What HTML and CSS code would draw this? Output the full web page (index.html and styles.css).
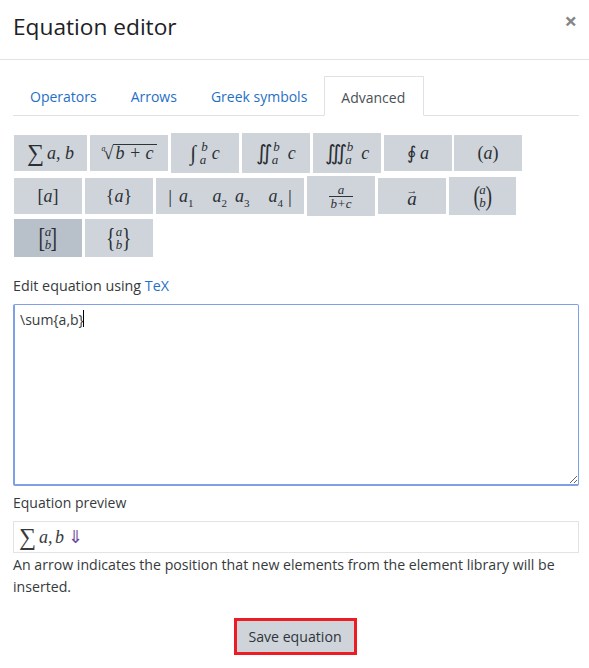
FILE: index.html
```html
<!DOCTYPE html>
<html lang="en">
<head>
    <meta charset="UTF-8">
    <title>Equation editor</title>
    <link rel="stylesheet" href="styles.css">
</head>
<body>
    <div class="modal-header">
        <h1>Equation editor</h1>
        <span class="close">&times;</span>
    </div>

    <div class="modal-body">
        <ul class="tabs">
            <li><a href="#">Operators</a></li>
            <li><a href="#">Arrows</a></li>
            <li><a href="#">Greek symbols</a></li>
            <li class="active"><a href="#">Advanced</a></li>
        </ul>

        <div class="library">
            <button class="eq w73"><span class="sigma">&sum;</span><i>a, b</i></button>
            <button class="eq w78"><sup class="idx">a</sup><span class="radic">&radic;</span><span class="over"><i>b + c</i></span></button>
            <button class="eq tall"><span class="int">&int;</span><span class="limits"><i class="up">b</i><i>a</i></span><i class="after">c</i></button>
            <button class="eq tall multi"><span class="int">&Int;</span><span class="limits"><i class="up">b</i><i>a</i></span><i class="after">c</i></button>
            <button class="eq tall multi"><span class="int">&iiint;</span><span class="limits"><i class="up">b</i><i>a</i></span><i class="after">c</i></button>
            <button class="eq"><span class="oint">&oint;</span><i class="after">a</i></button>
            <button class="eq pull">(<i>a</i>)</button>

            <button class="eq">[<i>a</i>]</button>
            <button class="eq">{<i>a</i>}</button>
            <button class="eq w148">
                <span class="bar">|</span>
                <span class="cells">
                    <i>a<sub>1</sub></i><i>a<sub>2</sub></i><i class="near">a<sub>3</sub></i><i>a<sub>4</sub></i>
                </span>
                <span class="bar">|</span>
            </button>
            <button class="eq tall"><span class="frac"><i>a</i><i class="den">b+c</i></span></button>
            <button class="eq"><span class="vec"><span class="vec-arrow">&rarr;</span><i>a</i></span></button>
            <button class="eq w67"><span class="big">(</span><span class="pair"><i>a</i><i>b</i></span><span class="big">)</span></button>

            <button class="eq mid-row picked"><span class="big">[</span><span class="pair"><i>a</i><i>b</i></span><span class="big">]</span></button>
            <button class="eq mid-row"><span class="big">{</span><span class="pair"><i>a</i><i>b</i></span><span class="big">}</span></button>
        </div>

        <p class="field-label">Edit equation using <a href="#">TeX</a></p>
        <div class="tex-wrap">
            <textarea class="tex" spellcheck="false">\sum{a,b}</textarea>
            <span class="caret"></span>
        </div>

        <p class="preview-label">Equation preview</p>
        <div class="preview"><span class="sigma">&sum;</span><i>a, b</i><span class="cursor">&dArr;</span></div>
        <p class="hint">An arrow indicates the position that new elements from the element library will be inserted.</p>

        <div class="actions">
            <button class="save">Save equation</button>
        </div>
    </div>
</body>
</html>
```

FILE: styles.css
```css
body {
    font-family: "Open Sans", "Noto Sans", sans-serif;
    font-size: 14.15px;
    color: #373a3c;
    background-color: #fff;
    margin: 0;
}

a {
    color: #1f6fc5;
    text-decoration: none;
}

.modal-header {
    display: flex;
    justify-content: space-between;
    height: 59px;
    padding: 0 13px;
    border-bottom: 1px solid #e3e3e6;
}

h1 {
    font-size: 22.7px;
    font-weight: 400;
    line-height: 30px;
    margin: 12px 0 0;
    color: #1d2125;
}

.close {
    font-size: 22px;
    font-weight: 700;
    line-height: 20px;
    margin: 10px -1px 0 0;
    color: #868686;
}

.modal-body {
    padding: 16px 10px 0 13px;
}

.tabs {
    display: flex;
    list-style: none;
    margin: 0;
    padding: 0;
    height: 39px;
    border-bottom: 1px solid #dee2e6;
    font-size: 14px;
}

.tabs li {
    height: 40px;
    box-sizing: border-box;
    padding: 0 17px;
    line-height: 41px;
}

.tabs .active {
    width: 100px;
    border: 1px solid #dee2e6;
    border-bottom-color: #fff;
    padding: 0 16px;
    background-color: #fff;
}

.tabs .active a {
    color: #495057;
}

.library {
    display: flex;
    flex-wrap: wrap;
    align-items: center;
    gap: 3px;
    margin: 17px 0 0 1px;
    width: 520px;
}

.eq {
    display: flex;
    align-items: center;
    justify-content: center;
    width: 68px;
    height: 36px;
    padding: 0;
    border: 0;
    background-color: #ced4da;
    color: #2b2f34;
    font-family: "Liberation Serif", serif;
    font-size: 18px;
    line-height: 1;
}

.eq i {
    font-style: italic;
}

.w73 { width: 73px; }
.w78 { width: 78px; }
.w67 { width: 67px; height: 38px; }
.w148 { width: 148px; }
.tall { height: 40px; }
.mid-row { height: 38px; }
.pull { margin-left: -1px; }

.picked {
    background-color: #b8c0c9;
}

.sigma {
    font-size: 24px;
    line-height: 1;
    margin-right: 3px;
}

.idx {
    font-size: 8px;
    margin: -8px -2px 0 0;
    font-style: italic;
}

.radic {
    font-size: 18px;
}

.over {
    border-top: 1px solid #30343a;
    padding: 0 3px 0 2px;
    line-height: 17px;
}

.int {
    font-size: 21px;
}

.oint {
    font-size: 18px;
}

.limits {
    display: flex;
    flex-direction: column;
    font-size: 13px;
    line-height: 13px;
    margin-left: 2px;
}

.up {
    margin-left: 3px;
}

.after {
    margin-left: 4px;
}

.multi .limits {
    margin-left: -3px;
}

.multi .after {
    margin-left: 8px;
}

.bar {
    font-size: 19px;
}

.cells {
    display: flex;
    gap: 19px;
    margin: 0 5px 0 7px;
}

.cells .near {
    margin-left: -11px;
}

sub {
    font-size: 11px;
    font-style: normal;
    line-height: 0;
}

.frac {
    display: flex;
    flex-direction: column;
    font-size: 13px;
    line-height: 13px;
}

.den {
    border-top: 1px solid #30343a;
    padding: 0 1px;
}

.vec {
    display: flex;
    flex-direction: column;
    align-items: center;
    line-height: 11px;
    font-size: 19px;
}

.vec-arrow {
    font-size: 11px;
    line-height: 5px;
}

.big {
    font-size: 28px;
    font-weight: 400;
    line-height: 28px;
    margin: 0 -2px;
    transform: scaleX(0.7);
}

.pair {
    display: flex;
    flex-direction: column;
    font-size: 13px;
    line-height: 13px;
}

.field-label {
    margin: 18px 0 0;
    line-height: 22px;
    font-size: 14.3px;
}

.tex-wrap {
    position: relative;
    margin-top: 7px;
}

.tex {
    display: block;
    box-sizing: border-box;
    width: 566px;
    height: 182px;
    padding: 4px 5px;
    border: 2px solid #7f9fe6;
    border-top-width: 1px;
    border-right-width: 1px;
    border-radius: 2px;
    font-family: "Open Sans", "Noto Sans", sans-serif;
    font-size: 14px;
    line-height: 21px;
    color: #373a3c;
    outline: none;
}

.caret {
    position: absolute;
    left: 70px;
    top: 6px;
    width: 1px;
    height: 17px;
    background-color: #000;
}

.preview-label {
    margin: 6px 0 0;
    line-height: 22px;
    font-size: 14px;
}

.preview {
    display: flex;
    align-items: center;
    box-sizing: border-box;
    width: 566px;
    height: 32px;
    margin-top: 7px;
    padding: 0 5px;
    border: 1px solid #e3e3e3;
    font-family: "Liberation Serif", serif;
    font-size: 18px;
    word-spacing: -2px;
}

.cursor {
    margin-left: 4px;
    color: #6b4a9c;
}

.hint {
    margin: 1px 0 0;
    line-height: 22px;
    width: 566px;
}

.actions {
    display: flex;
    justify-content: center;
    width: 564px;
    margin-top: 20px;
}

.save {
    box-sizing: border-box;
    width: 123px;
    height: 37px;
    padding: 0;
    border: 3px solid #ed1c24;
    background-color: #ced4da;
    color: #30343a;
    font-family: "Open Sans", "Noto Sans", sans-serif;
    font-size: 14.15px;
}
```
